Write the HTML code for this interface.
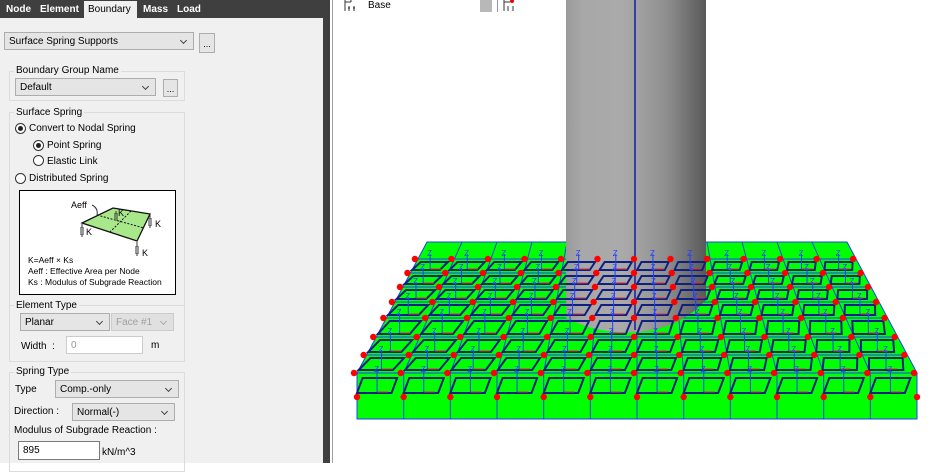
<!DOCTYPE html>
<html><head><meta charset="utf-8"><style>
*{margin:0;padding:0;box-sizing:border-box}
body{width:930px;height:463px;overflow:hidden;background:#fff;font-family:"Liberation Sans",sans-serif;font-size:10px;color:#000;position:relative}
.a{position:absolute;white-space:nowrap}
#panel{position:absolute;left:0;top:0;width:323px;height:463px;background:#f0f0f0}
#tabs{position:absolute;left:0;top:0;width:323px;height:18px;background:#3f3f3f}
.tab{position:absolute;top:4px;color:#fff;font-weight:bold;font-size:10px}
.dd{position:absolute;background:#e5e5e5;border:1px solid #adadad;height:18px;padding:3px 4px}
.dd:after{content:"";position:absolute;right:7px;top:5px;width:4px;height:4px;border-right:1px solid #444;border-bottom:1px solid #444;transform:rotate(45deg)}
.dis{color:#a0a0a0;border-color:#ccc;background:#e0e0e0}
.dis:after{border-color:#aaa}
.btn{position:absolute;background:#e5e5e5;border:1px solid #adadad;font-size:9px;text-align:center;line-height:20px}
.grp{position:absolute;border:1px solid #dcdcdc}
.lbl{position:absolute;background:#f0f0f0;padding:0 2px}
.rad{position:absolute;width:11px;height:11px;border:1px solid #333;border-radius:50%;background:#fff}
.rad.on:after{content:"";position:absolute;left:2px;top:2px;width:5px;height:5px;border-radius:50%;background:#222}
.inp{position:absolute;background:#fff;border:1px solid #7a7a7a;padding:3px 4px}
</style></head><body>
<div id="panel">
<div id="tabs">
<span class="tab" style="left:6px">Node</span>
<span class="tab" style="left:40px">Element</span>
<div style="position:absolute;left:84px;top:1px;width:53px;height:17px;background:#f0f0f0"></div>
<span class="tab" style="left:88px;color:#000;font-weight:normal">Boundary</span>
<span class="tab" style="left:143px">Mass</span>
<span class="tab" style="left:177px">Load</span>
</div>
<div class="dd" style="left:4px;top:32px;width:190px">Surface Spring Supports</div>
<div class="btn" style="left:199px;top:33px;width:16px;height:20px">...</div>
<div class="grp" style="left:9px;top:71px;width:176px;height:30px"></div>
<span class="a lbl" style="left:14px;top:65px">Boundary Group Name</span>
<div class="dd" style="left:15px;top:78px;width:141px">Default</div>
<div class="btn" style="left:163px;top:79px;width:15px;height:18px;line-height:18px">...</div>
<div class="grp" style="left:9px;top:112px;width:176px;height:250px"></div>
<span class="a lbl" style="left:14px;top:107px">Surface Spring</span>
<div class="rad on" style="left:15px;top:123px"></div><span class="a" style="left:29px;top:123px">Convert to Nodal Spring</span>
<div class="rad on" style="left:33px;top:140px"></div><span class="a" style="left:47px;top:140px">Point Spring</span>
<div class="rad" style="left:33px;top:155px"></div><span class="a" style="left:47px;top:156px">Elastic Link</span>
<div class="rad" style="left:15px;top:173px"></div><span class="a" style="left:29px;top:173px">Distributed Spring</span>
<div style="position:absolute;left:19px;top:190px;width:157px;height:105px;background:#fff;border:1px solid #000"></div>
<svg style="position:absolute;left:0;top:0" width="323" height="463">
<polygon points="82,223 113,208 150,214 137,241" fill="#a8e88a" stroke="#111" stroke-width="1.3"/>
<line x1="97" y1="215" x2="144" y2="228" stroke="#111" stroke-dasharray="2,1.5"/>
<line x1="131" y1="211" x2="110" y2="232" stroke="#111" stroke-dasharray="2,1.5"/>
<g stroke="#333" fill="none" stroke-width="1">
<path d="M82,224v4m-2,0h4m-4,2h4m-4,2h4m-4,2h4m-2,0v3"/>
<path d="M150,215v4m-2,0h4m-4,2h4m-4,2h4m-4,2h4m-2,0v3"/>
<path d="M137,242v5m-2,0h4m-4,2h4m-4,2h4m-4,2h4m-2,0v3"/>
<path d="M116,211v3m-2,0h4m-4,2h4m-4,2h4m-4,2h4"/>
<path d="M92,205c4,2 6,5 5,10"/>
</g>
<text x="71" y="208" font-size="9" font-family="Liberation Sans">Aeff</text>
<text x="86" y="235" font-size="9" font-family="Liberation Sans">K</text>
<text x="118" y="216" font-size="9" font-family="Liberation Sans">K</text>
<text x="155" y="227" font-size="9" font-family="Liberation Sans">K</text>
<text x="142" y="256" font-size="9" font-family="Liberation Sans">K</text>
<text x="28" y="263" font-size="8.5" font-family="Liberation Sans">K=Aeff × Ks</text>
<text x="28" y="274" font-size="8.5" font-family="Liberation Sans">Aeff : Effective Area per Node</text>
<text x="28" y="285" font-size="8.5" font-family="Liberation Sans">Ks   : Modulus of Subgrade Reaction</text>
</svg>
<div style="position:absolute;left:10px;top:305px;width:175px;border-top:1px solid #dcdcdc"></div>
<span class="a lbl" style="left:14px;top:300px">Element Type</span>
<div class="dd" style="left:20px;top:313px;width:90px">Planar</div>
<div class="dd dis" style="left:111px;top:313px;width:63px">Face #1</div>
<span class="a" style="left:21px;top:341px">Width &nbsp;:</span>
<div class="inp" style="left:66px;top:336px;width:77px;height:18px;border-color:#ccc;color:#999">0</div>
<span class="a" style="left:151px;top:340px">m</span>
<div class="grp" style="left:9px;top:372px;width:176px;height:100px"></div>
<span class="a lbl" style="left:14px;top:366px">Spring Type</span>
<span class="a" style="left:15px;top:384px">Type</span>
<div class="dd" style="left:55px;top:380px;width:124px">Comp.-only</div>
<span class="a" style="left:14px;top:406px">Direction :</span>
<div class="dd" style="left:72px;top:403px;width:103px">Normal(-)</div>
<span class="a" style="left:14px;top:425px">Modulus of Subgrade Reaction :</span>
<div class="inp" style="left:18px;top:441px;width:82px;height:19px">895</div>
<span class="a" style="left:102px;top:447px">kN/m^3</span>
</div>
<div style="position:absolute;left:323px;top:0;width:7px;height:463px;background:#3f3f3f"></div>
<div style="position:absolute;left:332px;top:0;width:1px;height:463px;background:#a0a0a0"></div>
<svg style="position:absolute;left:344px;top:0" width="16" height="12"><path d="M1,0v11M1,2h6M7,0v2M5,6v5M10,6v5M4,8h2M9,8h2" stroke="#333" fill="none"/></svg>
<span class="a" style="left:368px;top:0px;font-size:10px">Base</span>
<div style="position:absolute;left:480px;top:0;width:12px;height:12px;background:#b8b8b8"></div>
<div style="position:absolute;left:497px;top:0;width:1px;height:12px;background:#999"></div>
<svg style="position:absolute;left:503px;top:0" width="16" height="12"><path d="M1,0v11M1,2h6M5,6v5M10,6v5" stroke="#333" fill="none"/><circle cx="9" cy="1" r="2" fill="#e00"/></svg>
<svg id="sc" style="position:absolute;left:0;top:0" width="930" height="463">
<defs><linearGradient id="cy" x1="0" x2="1">
<stop offset="0" stop-color="#9a9a9a"/><stop offset="0.12" stop-color="#a8a8a8"/><stop offset="0.4" stop-color="#aaaaaa"/><stop offset="0.55" stop-color="#9e9e9e"/><stop offset="0.72" stop-color="#8e8e8e"/><stop offset="0.86" stop-color="#747474"/><stop offset="1" stop-color="#585858"/></linearGradient></defs>
</svg>
<script>
var s=document.getElementById('sc'),h='';
var rows=[242,259,273,287,302,318,337,355,373];
function X(u,y){var t=(y-242)/131;var L=427-70*t,R=847+70*t;return L+(R-L)*u;}
h+='<polygon points="427,242 847,242 917,373 357,373" fill="#00ff00" stroke="#2040ff"/>';
h+='<rect x="357" y="373" width="560" height="46" fill="#00ff00" stroke="#2040ff"/>';
for(var i=1;i<8;i++)h+='<line x1="'+X(0,rows[i])+'" y1="'+rows[i]+'" x2="'+X(1,rows[i])+'" y2="'+rows[i]+'" stroke="#2040ff"/>';
for(var j=1;j<12;j++){var u=j/12;h+='<line x1="'+X(u,242)+'" y1="242" x2="'+X(u,373)+'" y2="373" stroke="#2040ff"/><line x1="'+X(u,373)+'" y1="373" x2="'+X(u,373)+'" y2="419" stroke="#2040ff"/>';}
h+='<path d="M566,0V318Q600,335 640,332Q680,328 706,300V0Z" fill="url(#cy)"/>';
h+='<line x1="635" y1="0" x2="635" y2="330" stroke="#1020a0" stroke-width="1.5"/>';
var sr=rows.concat([397]);
for(var i=1;i<9;i++){var y0=sr[i]+3,y1=sr[i+1]-3;if(i==8){y0=378;y1=393;}
for(var j=0;j<12;j++){var u0=(j+0.12)/12,u1=(j+0.86)/12;
var ya=Math.min(y0,373),yb=Math.min(y1,373);
var ax=X(u0-0.01,yb),bx=X(u1-0.01,yb),cx=X(u0,ya),dx=X(u1,ya);
h+='<polygon points="'+cx+','+y0+' '+dx+','+y0+' '+bx+','+y1+' '+ax+','+y1+'" fill="none" stroke="#102080" stroke-width="2"/>';
var mx=(ax+bx+cx+dx)/4;
h+='<line x1="'+mx+'" y1="'+(y1-1)+'" x2="'+(mx+11)+'" y2="'+(y1-1)+'" stroke="#e03030"/>';
h+='<line x1="'+mx+'" y1="'+(y0-8)+'" x2="'+mx+'" y2="'+(y1-1)+'" stroke="#2040ff"/>';
h+='<text x="'+(mx-3)+'" y="'+(y0-6)+'" font-size="8" fill="#2040ff" font-family="Liberation Sans">Z</text>';}}
for(var i=1;i<9;i++){for(var j=0;j<=12;j++){var y=sr[i];var x=X(j/12,y)-3;
h+='<circle cx="'+x+'" cy="'+y+'" r="3.2" fill="#f00"/>';}}
for(var j=0;j<=12;j++)h+='<circle cx="'+(357+j*560/12)+'" cy="397" r="3.2" fill="#f00"/>';
s.insertAdjacentHTML('beforeend',h);
</script>
</body></html>
